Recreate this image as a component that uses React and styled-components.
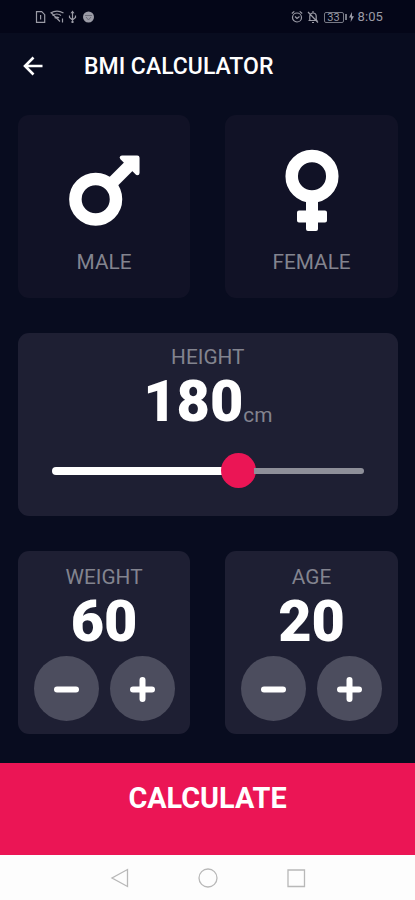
import styled, { createGlobalStyle } from 'styled-components';
import {useState} from 'react';

const GlobalStyle = createGlobalStyle`
	* {
		box-sizing: border-box;
	}
	body {
		margin: 0;
		background-color: #090c1f;
		font-family: Roboto, "Liberation Sans", sans-serif;
	}
	button {
		font-family: inherit;
		border: none;
		padding: 0;
		cursor: pointer;
	}
	svg {
		display: block;
	}
`
const Screen = styled.div`
	width: 100%;
	height: 900px;
	display: flex;
	flex-direction: column;
	background-color: #080c1f;
	overflow: hidden;
`
const StatusBar = styled.div`
	height: 33px;
	flex: none;
	display: flex;
	align-items: center;
	justify-content: space-between;
	padding: 1px 32px 0 34px;
	background-color: #040618;
	color: #9b9ba6;
`
const StatusGroup = styled.div`
	display: flex;
	align-items: center;
	gap: ${props => props.$gap}px;
`
const Battery = styled.div`
	width: 20px;
	height: 11px;
	border: 1px solid #777985;
	border-radius: 2px;
	font-size: 11px;
	line-height: 10px;
	text-align: center;
`
const BatteryBox = styled.div`
	display: flex;
	align-items: center;
	gap: 1px;
	margin-left: 1px;
`
const BatteryTip = styled.div`
	width: 2px;
	height: 6px;
	background-color: #777985;
`
const Clock = styled.span`
	font-size: 13px;
	line-height: 16px;
	letter-spacing: 0.1px;
	margin-left: -1px;
`
const AppBar = styled.header`
	height: 66px;
	flex: none;
	display: flex;
	align-items: center;
	padding-left: 23px;
	gap: 40px;
	background-color: #080c1f;
`
const BackButton = styled.button`
	background: none;
	color: white;
`
const Title = styled.h1`
	margin: 2px 0 0;
	font-size: 23px;
	line-height: 28px;
	font-weight: 500;
	color: white;
`
const Main = styled.main`
	flex: 1;
	display: grid;
	grid-template-columns: 1fr 1fr;
	grid-template-rows: 183px 183px 183px;
	column-gap: 35px;
	row-gap: 35px;
	padding: 16px 17.2px 0 17.8px;
`
const Card = styled.section`
	display: flex;
	flex-direction: column;
	align-items: center;
	grid-column: ${props => props.$wide ? '1 / -1' : 'auto'};
	padding-top: ${props => props.$top || 0}px;
	border-radius: 11px;
	background-color: ${props => props.$muted ? '#111226' : '#1e1f33'};
	cursor: ${props => props.$muted ? 'pointer' : 'default'};
`
const GenderIcon = styled.svg`
	width: 92px;
	height: 92px;
	margin: 30px 0 13px;
	fill: none;
	stroke: white;
	stroke-linejoin: round;
`
const Label = styled.span`
	font-size: 20.8px;
	line-height: 24px;
	color: #83848f;
`
const NumberRow = styled.div`
	display: flex;
	align-items: baseline;
	height: 66px;
	line-height: 66px;
`
const Value = styled.span`
	font-size: 57.6px;
	font-weight: 900;
	color: white;
`
const Unit = styled(Label)`
	align-self: flex-end;
	line-height: 40px;
`
const SliderTrack = styled.div`
	display: flex;
	align-items: center;
	width: 312px;
	height: 35px;
	margin-top: 18px;
`
const TrackFilled = styled.div`
	height: 8px;
	border-radius: 4px 0 0 4px;
	background-color: white;
	margin-right: -2px;
`
const TrackRest = styled.div`
	flex: 1;
	height: 6px;
	border-radius: 0 3px 3px 0;
	background-color: #8e8f99;
	margin-left: -2px;
`
const Thumb = styled.div`
	width: 35px;
	height: 35px;
	flex: none;
	border-radius: 50%;
	background-color: #eb1555;
`
const Buttons = styled.div`
	display: flex;
	gap: 11px;
	margin-top: 1px;
`
const RoundButton = styled.button`
	display: flex;
	align-items: center;
	justify-content: center;
	width: 65px;
	height: 65px;
	padding-top: 2px;
	border-radius: 50%;
	background-color: #4c4d5e;
`
const Calculate = styled.button`
	height: 92px;
	flex: none;
	padding-bottom: 23px;
	background-color: #eb1555;
	color: white;
	font-size: 28.8px;
	font-weight: 700;
`
const NavBar = styled.nav`
	height: 45px;
	flex: none;
	display: flex;
	justify-content: center;
	align-items: center;
	gap: 68px;
	background-color: #fdfdfd;
`

const StatusIcon = ({width = 13, children}) => (
	<svg width={width} height="14" viewBox={`0 0 ${width} 14`} fill="none" stroke="currentColor" strokeWidth="1.2">
		{children}
	</svg>
)

const Counter = ({label, value, onChange}) => (
	<Card $top={14}>
		<Label>{label}</Label>
		<NumberRow>
			<Value>{value}</Value>
		</NumberRow>
		<Buttons>
			<RoundButton aria-label="decrease" onClick={()=>onChange(value-1)}>
				<svg width="27" height="27" stroke="white" strokeWidth="6" strokeLinecap="round">
					<path d="M4 13.5h19"/>
				</svg>
			</RoundButton>
			<RoundButton aria-label="increase" onClick={()=>onChange(value+1)}>
				<svg width="27" height="27" stroke="white" strokeWidth="6" strokeLinecap="round">
					<path d="M4 13.5h19M13.5 4v19"/>
				</svg>
			</RoundButton>
		</Buttons>
	</Card>
)

const MIN_HEIGHT = 120;
const MAX_HEIGHT = 220;

const App = () => {
	const [height] = useState(180);
	const [weight, setWeight] = useState(60);
	const [age, setAge] = useState(20);
	const filled = (height - MIN_HEIGHT) / (MAX_HEIGHT - MIN_HEIGHT);
	return (
		<Screen>
			<GlobalStyle/>
			<StatusBar>
				<StatusGroup $gap={3}>
					<StatusIcon>
						<path d="M2.5 1.7h5.2l3 3v7.6H2.5zM6.6 5v4.5"/>
					</StatusIcon>
					<StatusIcon width={14}>
						<path d="M.5 3Q7-.8 13.5 3M2.5 5.5Q7 2.5 11 5.5M4.5 8Q7 6.2 9 8M1 2.5l9 9M12.5 8.5v4"/>
					</StatusIcon>
					<StatusIcon width={11}>
						<path d="M5.5 2v10M2.5 5.5v2l3 2.5 3-2.5v-2"/>
						<path d="M5.5.5l2 2.8h-4zM4.5 11h2v2h-2z" fill="currentColor" stroke="none"/>
					</StatusIcon>
					<StatusIcon width={13}>
						<circle cx="7.5" cy="7" r="5.5" fill="currentColor" stroke="none"/>
						<path d="M4 5.5h7M5 7l2.5 3L10 7" stroke="#6b6c78" strokeWidth="1"/>
					</StatusIcon>
				</StatusGroup>
				<StatusGroup $gap={4}>
					<StatusIcon width={12}>
						<circle cx="6" cy="7.5" r="4.5"/>
						<path d="M.8 3.5L3.3 1.4M11.2 3.5L8.7 1.4M4 6.5l2 2 2.5-2"/>
					</StatusIcon>
					<StatusIcon width={12}>
						<path d="M2.8 10V6.2a3.2 3.2 0 0 1 6.4 0V10M1.5 10.5h9M6 1v2M5 12.5h2M1 2l10 10.5"/>
					</StatusIcon>
					<BatteryBox>
						<Battery>33</Battery>
						<BatteryTip/>
						<svg width="7" height="10" viewBox="0 0 7 10" fill="currentColor">
							<path d="M4 0L1 5.5h2L2.7 10 6 4.2H4z"/>
						</svg>
					</BatteryBox>
					<Clock>8:05</Clock>
				</StatusGroup>
			</StatusBar>
			<AppBar>
				<BackButton aria-label="back">
					<svg width="21" height="20" viewBox="0 0 21 20" fill="none" stroke="currentColor" strokeWidth="2.6">
						<path d="M19.5 10H3M10.5 1.5L2 10l8.5 8.5"/>
					</svg>
				</BackButton>
				<Title>BMI CALCULATOR</Title>
			</AppBar>
			<Main>
				<Card $muted>
					<GenderIcon viewBox="0 0 92 92">
						<circle cx="37.7" cy="54.3" r="20.3" strokeWidth="12.5"/>
						<path d="M52 40L72 20" strokeWidth="12"/>
						<path d="M64 12.7h15.3v15.3z" fill="white" strokeWidth="4.5"/>
					</GenderIcon>
					<Label>MALE</Label>
				</Card>
				<Card $muted>
					<GenderIcon viewBox="0 0 92 92">
						<circle cx="46" cy="31.3" r="20.3" strokeWidth="12.5"/>
						<path d="M42 54h8v30h-8zM33 67.5h26v8H33z" fill="white" strokeWidth="4"/>
					</GenderIcon>
					<Label>FEMALE</Label>
				</Card>
				<Card $wide $top={12}>
					<Label>HEIGHT</Label>
					<NumberRow>
						<Value>{height}</Value>
						<Unit>cm</Unit>
					</NumberRow>
					<SliderTrack>
						<TrackFilled style={{width: `calc(${filled * 100}% - 15.5px)`}}/>
						<Thumb/>
						<TrackRest/>
					</SliderTrack>
				</Card>
				<Counter label="WEIGHT" value={weight} onChange={setWeight}/>
				<Counter label="AGE" value={age} onChange={setAge}/>
			</Main>
			<Calculate>CALCULATE</Calculate>
			<NavBar>
				<svg width="20" height="20" fill="none" stroke="#b8b8b8" strokeWidth="1.3">
					<path d="M17.5 1.5v17L2 10z"/>
				</svg>
				<svg width="20" height="20" fill="none" stroke="#b8b8b8" strokeWidth="1.3">
					<circle cx="10" cy="10" r="9"/>
				</svg>
				<svg width="20" height="20" fill="none" stroke="#b8b8b8" strokeWidth="1.3">
					<path d="M2 2h16.5v16.5H2z"/>
				</svg>
			</NavBar>
		</Screen>
	)
}

export default App
